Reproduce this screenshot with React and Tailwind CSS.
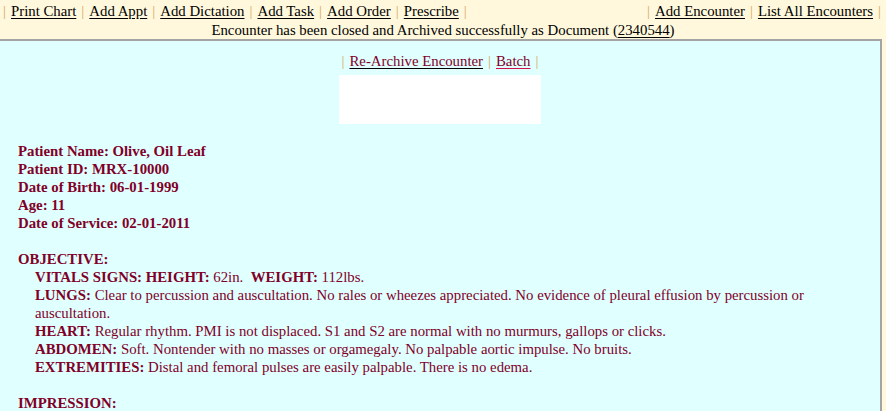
import React from "react";

const Sep = () => <span className="text-[#d8a860] px-[5px]">|</span>;

function NavLinks({ items, className = "" }) {
  return (
    <div className={`flex items-center ${className}`}>
      <Sep />
      {items.map((item) => (
        <React.Fragment key={item}>
          <a href="#" className="text-black underline underline-offset-2">
            {item}
          </a>
          <Sep />
        </React.Fragment>
      ))}
    </div>
  );
}

function Section({ label, children }) {
  return (
    <p className="pl-[17px]">
      <b>{label}</b> {children}
    </p>
  );
}

export default function App() {
  return (
    <div
      className="w-[886px] h-[411px] overflow-hidden bg-[#fff8dc] text-[14.8px] leading-[18px] text-[#800028]"
      style={{ fontFamily: '"Liberation Serif", serif' }}
    >
      {/* top menu */}
      <div className="flex justify-between items-center h-[21px]">
        <NavLinks
          className="-ml-[2px]"
          items={["Print Chart", "Add Appt", "Add Dictation", "Add Task", "Add Order", "Prescribe"]}
        />
        <NavLinks items={["Add Encounter", "List All Encounters"]} />
      </div>
      <div className="h-[18px] text-center text-black">
        Encounter has been closed and Archived successfully as Document (
        <a href="#" className="underline underline-offset-2">2340544</a>)
      </div>

      {/* encounter panel */}
      <div className="w-[882px] h-[400px] bg-[#e0ffff] border-t-2 border-r-2 border-[#a4a4a4]">
        <div className="flex justify-center pt-[11px]">
          <div className="flex items-center">
            <Sep />
            <a href="#" className="underline underline-offset-2 decoration-black">Re-Archive Encounter</a>
            <Sep />
            <a href="#" className="underline underline-offset-2 decoration-[#d0104a]">Batch</a>
            <Sep />
          </div>
        </div>
        <div className="mx-auto mt-[5px] w-[202px] h-[49px] bg-white" />

        <div className="pl-[18px] pt-[18px]">
          <div className="font-bold">
            <p>Patient Name: Olive, Oil Leaf</p>
            <p>Patient ID: MRX-10000</p>
            <p>Date of Birth: 06-01-1999</p>
            <p>Age: 11</p>
            <p>Date of Service: 02-01-2011</p>
          </div>

          <p className="font-bold mt-[18px]">OBJECTIVE:</p>
          <div className="pr-[60px]">
            <Section label="VITALS SIGNS: HEIGHT:">
              62in.&nbsp; <b>WEIGHT:</b> 112lbs.
            </Section>
            <Section label="LUNGS:">
              Clear to percussion and auscultation. No rales or wheezes appreciated. No evidence of pleural effusion by percussion or auscultation.
            </Section>
            <Section label="HEART:">
              Regular rhythm. PMI is not displaced. S1 and S2 are normal with no murmurs, gallops or clicks.
            </Section>
            <Section label="ABDOMEN:">
              Soft. Nontender with no masses or orgamegaly. No palpable aortic impulse. No bruits.
            </Section>
            <Section label="EXTREMITIES:">
              Distal and femoral pulses are easily palpable. There is no edema.
            </Section>
          </div>

          <p className="font-bold mt-[18px]">IMPRESSION:</p>
        </div>
      </div>
    </div>
  );
}
